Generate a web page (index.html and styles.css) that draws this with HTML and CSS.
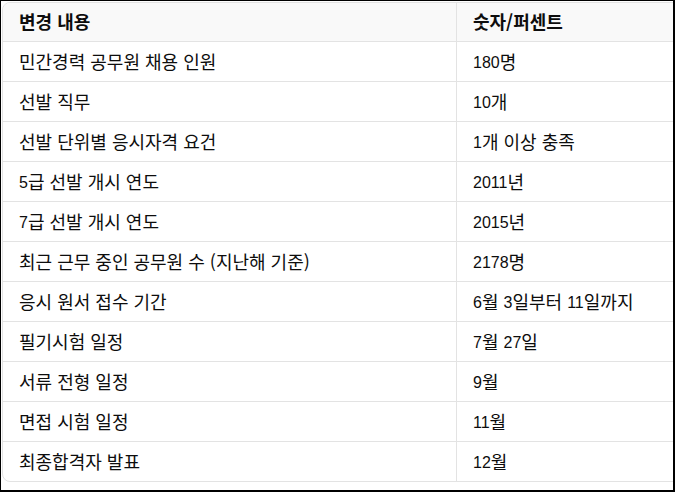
FILE: index.html
```html
<!DOCTYPE html>
<html lang="ko">
<head>
<meta charset="utf-8">
<link rel="stylesheet" href="styles.css">
</head>
<body>
<div class="frame">
  <div class="card">
    <table class="data">
      <thead>
        <tr><th class="c1">변경 내용</th><th class="c2">숫자/퍼센트</th></tr>
      </thead>
      <tbody>
        <tr><td class="c1">민간경력 공무원 채용 인원</td><td class="c2"><span class="num">180</span>명</td></tr>
        <tr><td class="c1">선발 직무</td><td class="c2"><span class="num">10</span>개</td></tr>
        <tr><td class="c1">선발 단위별 응시자격 요건</td><td class="c2"><span class="num">1</span>개 이상 충족</td></tr>
        <tr><td class="c1"><span class="num">5</span>급 선발 개시 연도</td><td class="c2"><span class="num">2011</span>년</td></tr>
        <tr><td class="c1"><span class="num">7</span>급 선발 개시 연도</td><td class="c2"><span class="num">2015</span>년</td></tr>
        <tr><td class="c1">최근 근무 중인 공무원 수 (지난해 기준)</td><td class="c2"><span class="num">2178</span>명</td></tr>
        <tr><td class="c1">응시 원서 접수 기간</td><td class="c2"><span class="num">6</span>월 <span class="num">3</span>일부터 <span class="num">11</span>일까지</td></tr>
        <tr><td class="c1">필기시험 일정</td><td class="c2"><span class="num">7</span>월 <span class="num">27</span>일</td></tr>
        <tr><td class="c1">서류 전형 일정</td><td class="c2"><span class="num">9</span>월</td></tr>
        <tr><td class="c1">면접 시험 일정</td><td class="c2"><span class="num">11</span>월</td></tr>
        <tr><td class="c1">최종합격자 발표</td><td class="c2"><span class="num">12</span>월</td></tr>
      </tbody>
    </table>
  </div>
</div>
</body>
</html>
```
FILE: styles.css
```css
html, body { margin: 0; padding: 0; background: #fff; }
.frame {
  width: 675px;
  height: 492px;
  box-sizing: border-box;
  border-style: solid;
  border-color: #000;
  border-width: 1px 2px 2px 1px;
  overflow: hidden;
  padding: 1px 0 0 1px;
}
.card {
  width: 700px;
  border: 1px solid #e3e3e3;
  border-radius: 8px;
  overflow: hidden;
}
.data {
  width: 100%;
  border-collapse: collapse;
  border-spacing: 0;
  font-family: "Noto Sans CJK KR", "Liberation Sans", sans-serif;
  font-size: 18px;
  line-height: 20px;
  color: #0d0d0d;
}
.data th, .data td {
  text-align: left;
  height: 20px;
  padding: 9px 16px 10px 16px;
  border-bottom: 1px solid #e3e3e3;
  white-space: nowrap;
}
.data th {
  background: #f9f9f9;
  font-weight: 700;
  padding: 8px 16px 10px 16px;
}
.num {
  font-family: "Liberation Sans", Arial, sans-serif;
  font-size: 16px;
  line-height: 0;
  vertical-align: 1px;
}
.data tbody tr:last-child td { border-bottom: none; }
.c1 { width: 421px; border-right: 1px solid #e3e3e3; }
.data th.c2, .data td.c2 { border-right: none; }
```
